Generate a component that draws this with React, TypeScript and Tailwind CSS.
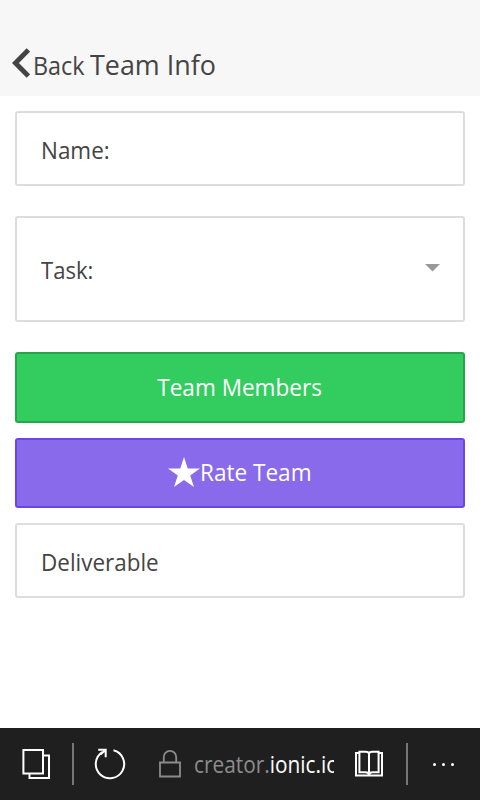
function Header() {
  return (
    <header className="flex h-24 items-end bg-[#f7f7f7] pl-3 text-[#444]">
      <svg className="mb-[18px] h-[30px] w-[18px] shrink-0" viewBox="0 0 18 30" fill="none" stroke="#444" strokeWidth="5" strokeLinejoin="miter">
        <path d="M16.4 1.9 3.4 15l13 13.1" />
      </svg>
      <span className="mb-[13px] ml-[2.5px] w-[54px] origin-left scale-x-[0.935] whitespace-nowrap text-[25px] leading-[36px]">Back</span>
      <h1 className="mb-[14px] ml-[3.5px] origin-left scale-x-[0.96] whitespace-nowrap text-[28px] leading-[36px]">Team Info</h1>
    </header>
  );
}

function BrowserBar() {
  return (
    <footer className="flex h-[72px] items-center bg-[#1f1f1f] text-white">
      <svg className="ml-[22px] h-[32px] w-[28px] shrink-0" viewBox="0 0 28 32" fill="none" stroke="white" strokeWidth="2">
        <path d="M1.4 2H21v23.5H1.4zM21 7.5h6V30H7.5v-4.5" />
      </svg>
      <div className="ml-[22px] h-[42px] w-[2px] shrink-0 bg-[#777]" />
      <svg className="ml-[20px] h-[32px] w-[32px] shrink-0" viewBox="0.3 0.3 32 32" fill="none" stroke="white" strokeWidth="2">
        <path d="M19.8 2.6A14.2 14.2 0 1 1 8.6 4.4M4.5 2H12v7.5M11.8 2.2 7 6.5" />
      </svg>
      <svg className="ml-[33px] h-[30px] w-[22px] shrink-0" viewBox="0 0 22 30" fill="none" stroke="#8c8c8c" strokeWidth="1.8">
        <path d="M1 13.5h20v14H1zM4.8 13.5V8a6.2 6.2 0 0 1 12.4 0v5.5" />
      </svg>
      <div className="ml-[13px] w-[140px] shrink-0 overflow-hidden whitespace-nowrap text-[23px] leading-[34px]">
        <div className="w-[155px] origin-left scale-x-[0.905]">
          <span className="text-[#8c8c8c]">creator.</span>ionic.io
        </div>
      </div>
      <svg className="ml-[20px] h-[30px] w-[30px] shrink-0" viewBox="0 0 30 30" fill="none" stroke="white" strokeWidth="2">
        <path d="M5 4H2v22.5h26V4h-3M5.4 2.8h6Q15 2.8 15 5q0-2.2 3.6-2.2h6v20.4h-6Q15 23.2 15 26q0-2.8-3.6-2.8h-6zM15 5v21" />
      </svg>
      <div className="ml-[22px] h-[42px] w-[2px] shrink-0 bg-[#777]" />
      <div className="ml-[25px] mt-[1px] flex gap-[6px]">
        <i className="h-[3px] w-[3px] rounded-full bg-white" />
        <i className="h-[3px] w-[3px] rounded-full bg-white" />
        <i className="h-[3px] w-[3px] rounded-full bg-white" />
      </div>
    </footer>
  );
}

export default function App() {
  return (
    <div className="flex h-[800px] w-[480px] flex-col overflow-hidden bg-white font-['Open_Sans','Noto_Sans',sans-serif] text-[24px] leading-[34px] text-[#444]">
      <Header />
      <main className="flex flex-1 flex-col px-[15px] pt-[15px]">
        <div className="flex h-[75px] items-center rounded-[3px] border-2 border-[#ddd] pl-6 pt-[2px]">
          <span className="origin-left scale-x-[0.935]">Name:</span>
        </div>
        <div className="mt-[30px] flex h-[106px] items-center justify-between rounded-[3px] border-2 border-[#ddd] pl-6 pr-[23px]">
          <span className="mt-[2px] origin-left scale-x-[0.92]">Task:</span>
          <svg className="mb-[3px] h-[8px] w-[15px]" viewBox="0 0 15 8" fill="#999"><path d="M0 0h15L7.5 7.6z" /></svg>
        </div>
        <button className="mt-[30px] flex h-[71px] items-center justify-center rounded-[3px] border-2 border-[#28a54c] bg-[#33cd5f] pb-[2px] text-white">
          <span className="scale-x-[0.94]">Team Members</span>
        </button>
        <button className="mt-[15px] flex h-[70px] items-center justify-center rounded-[3px] border-2 border-[#6b46e5] bg-[#886aea] pb-[2px] text-white">
          <svg className="h-[30px] w-[32px] shrink-0" viewBox="0 0 32 30" fill="white"><path d="m16 0 3.8 11.5H32l-9.8 7.1L26 30l-10-7-10 7 3.8-11.4L0 11.5h12.2z" /></svg>
          <span className="w-[112px] origin-left scale-x-[0.94] whitespace-nowrap text-left">Rate Team</span>
        </button>
        <div className="mt-[15px] flex h-[75px] items-center rounded-[3px] border-2 border-[#ddd] pl-6 pt-[2px]">
          <span className="origin-left scale-x-[0.935]">Deliverable</span>
        </div>
      </main>
      <BrowserBar />
    </div>
  );
}
